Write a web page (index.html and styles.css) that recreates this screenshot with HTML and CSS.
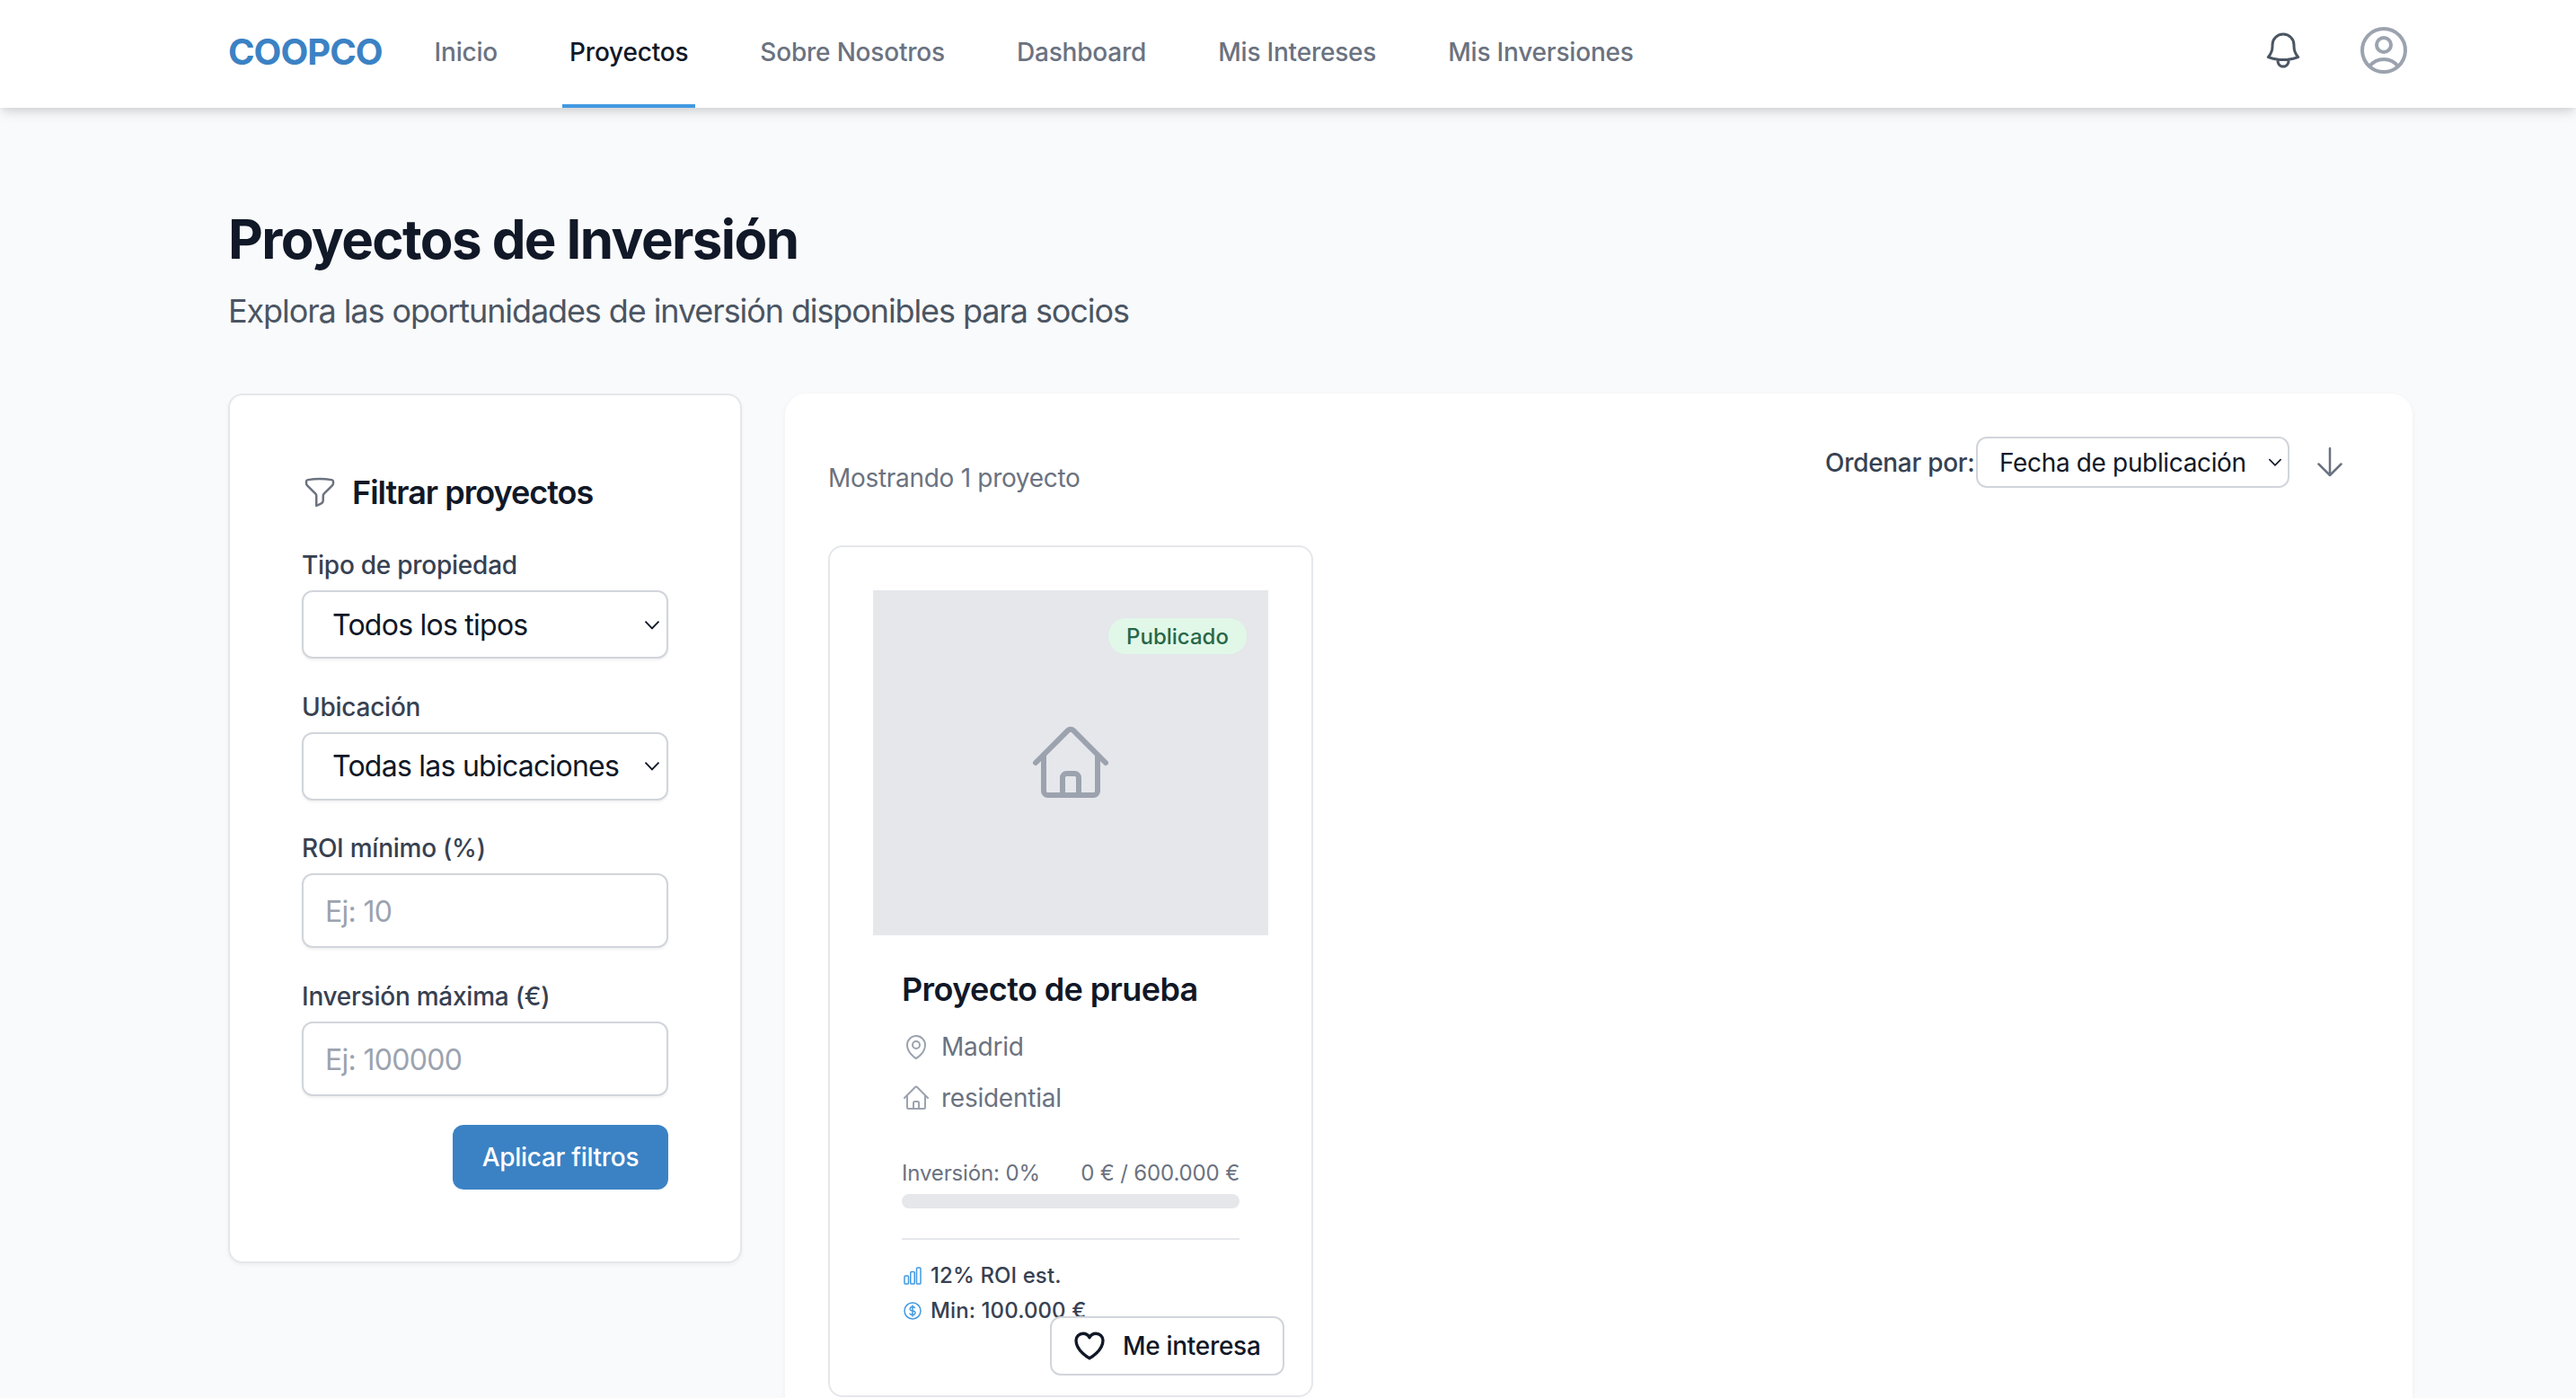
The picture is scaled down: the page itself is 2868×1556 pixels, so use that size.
FILE: index.html
```html
<!DOCTYPE html>
<html lang="es">
<head>
  <meta charset="UTF-8">
  <title>Proyectos de Inversión - COOPCO</title>
  <link rel="stylesheet" href="styles.css">
</head>
<body>
  <header class="topbar">
    <div class="topbar-inner">
      <a class="logo" href="#">COOPCO</a>
      <nav class="nav">
        <a class="nav-link" href="#">Inicio</a>
        <a class="nav-link active" href="#">Proyectos</a>
        <a class="nav-link" href="#">Sobre Nosotros</a>
        <a class="nav-link" href="#">Dashboard</a>
        <a class="nav-link" href="#">Mis Intereses</a>
        <a class="nav-link" href="#">Mis Inversiones</a>
      </nav>
      <div class="topbar-icons">
        <svg class="icon icon-bell" viewBox="0 0 24 24"><path d="M14.857 17.082a23.848 23.848 0 005.454-1.31A8.967 8.967 0 0118 9.75v-.7V9A6 6 0 006 9v.75a8.967 8.967 0 01-2.312 6.022c1.733.64 3.56 1.085 5.455 1.31m5.714 0a24.255 24.255 0 01-5.714 0m5.714 0a3 3 0 11-5.714 0"/></svg>
        <svg class="icon icon-user" viewBox="0 0 24 24"><path d="M17.982 18.725A7.488 7.488 0 0012 15.75a7.488 7.488 0 00-5.982 2.975m11.964 0a9 9 0 10-11.963 0m11.963 0A8.966 8.966 0 0112 21a8.966 8.966 0 01-5.982-2.275M15 9.75a3 3 0 11-6 0 3 3 0 016 0z"/></svg>
      </div>
    </div>
  </header>

  <main class="page">
    <h1 class="page-title">Proyectos de Inversión</h1>
    <p class="page-subtitle">Explora las oportunidades de inversión disponibles para socios</p>

    <div class="columns">
      <aside class="filters">
        <h2 class="filters-title">
          <svg class="icon icon-funnel" viewBox="0 0 24 24"><path d="M12 3c2.755 0 5.455.232 8.083.678.533.09.917.556.917 1.096v1.044a2.25 2.25 0 01-.659 1.591l-5.432 5.432a2.25 2.25 0 00-.659 1.591v2.927a2.25 2.25 0 01-1.244 2.013L9.75 21v-6.568a2.25 2.25 0 00-.659-1.591L3.659 7.409A2.25 2.25 0 013 5.818V4.774c0-.54.384-1.006.917-1.096A48.32 48.32 0 0112 3z"/></svg>
          Filtrar proyectos
        </h2>
        <div class="field">
          <label class="field-label">Tipo de propiedad</label>
          <select class="select select-large"><option>Todos los tipos</option></select>
        </div>
        <div class="field">
          <label class="field-label">Ubicación</label>
          <select class="select select-large"><option>Todas las ubicaciones</option></select>
        </div>
        <div class="field">
          <label class="field-label">ROI mínimo (%)</label>
          <input class="text-input" type="text" placeholder="Ej: 10">
        </div>
        <div class="field">
          <label class="field-label">Inversión máxima (€)</label>
          <input class="text-input" type="text" placeholder="Ej: 100000">
        </div>
        <div class="filters-actions">
          <button class="btn-primary">Aplicar filtros</button>
        </div>
      </aside>

      <section class="results">
        <div class="toolbar">
          <span class="results-count">Mostrando 1 proyecto</span>
          <div class="sort">
            <label class="sort-label">Ordenar por:</label>
            <select class="select select-small"><option>Fecha de publicación</option></select>
            <svg class="icon icon-arrow" viewBox="0 0 24 24"><path d="M19.5 13.5L12 21m0 0l-7.5-7.5M12 21V3"/></svg>
          </div>
        </div>

        <article class="project">
          <div class="project-image">
            <span class="badge">Publicado</span>
            <svg class="icon icon-house" viewBox="0 0 24 24"><path d="M2.25 12l8.954-8.955c.44-.439 1.152-.439 1.591 0L21.75 12M4.5 9.75v10.125c0 .621.504 1.125 1.125 1.125H9.75v-4.875c0-.621.504-1.125 1.125-1.125h2.25c.621 0 1.125.504 1.125 1.125V21h4.125c.621 0 1.125-.504 1.125-1.125V9.75M8.25 21h8.25"/></svg>
          </div>
          <div class="project-body">
            <h3 class="project-title">Proyecto de prueba</h3>
            <div class="project-meta first">
              <svg class="icon icon-meta" viewBox="0 0 24 24"><path d="M15 10.5a3 3 0 11-6 0 3 3 0 016 0z"/><path d="M19.5 10.5c0 7.142-7.5 11.25-7.5 11.25S4.5 17.642 4.5 10.5a7.5 7.5 0 1115 0z"/></svg>
              Madrid
            </div>
            <div class="project-meta">
              <svg class="icon icon-meta" viewBox="0 0 24 24"><path d="M2.25 12l8.954-8.955c.44-.439 1.152-.439 1.591 0L21.75 12M4.5 9.75v10.125c0 .621.504 1.125 1.125 1.125H9.75v-4.875c0-.621.504-1.125 1.125-1.125h2.25c.621 0 1.125.504 1.125 1.125V21h4.125c.621 0 1.125-.504 1.125-1.125V9.75M8.25 21h8.25"/></svg>
              residential
            </div>
            <div class="progress-labels">
              <span>Inversión: 0%</span>
              <span>0 € / 600.000 €</span>
            </div>
            <div class="progress-bar"></div>
            <div class="project-stats">
              <div class="stat">
                <svg class="icon icon-stat" viewBox="0 0 24 24"><path d="M3 13.125C3 12.504 3.504 12 4.125 12h2.25c.621 0 1.125.504 1.125 1.125v6.75C7.5 20.496 6.996 21 6.375 21h-2.25A1.125 1.125 0 013 19.875v-6.75zM9.75 8.625c0-.621.504-1.125 1.125-1.125h2.25c.621 0 1.125.504 1.125 1.125v11.25c0 .621-.504 1.125-1.125 1.125h-2.25a1.125 1.125 0 01-1.125-1.125V8.625zM16.5 4.125c0-.621.504-1.125 1.125-1.125h2.25C20.496 3 21 3.504 21 4.125v15.75c0 .621-.504 1.125-1.125 1.125h-2.25a1.125 1.125 0 01-1.125-1.125V4.125z"/></svg>
                12% ROI est.
              </div>
              <div class="stat">
                <svg class="icon icon-stat" viewBox="0 0 24 24"><path d="M12 6v12m-3-2.818l.879.659c1.171.879 3.07.879 4.242 0 1.172-.879 1.172-2.303 0-3.182C13.536 12.219 12.768 12 12 12c-.725 0-1.45-.22-2.003-.659-1.106-.879-1.106-2.303 0-3.182s2.9-.879 4.006 0l.415.33M21 12a9 9 0 11-18 0 9 9 0 0118 0z"/></svg>
                Min: 100.000 €
              </div>
            </div>
          </div>
          <button class="btn-interest">
            <svg class="icon icon-heart" viewBox="0 0 24 24"><path d="M21 8.25c0-2.485-2.099-4.5-4.688-4.5-1.935 0-3.597 1.126-4.312 2.733-.715-1.607-2.377-2.733-4.313-2.733C5.1 3.75 3 5.765 3 8.25c0 7.22 9 12 9 12s9-4.78 9-12z"/></svg>
            Me interesa
          </button>
        </article>
      </section>
    </div>
  </main>
</body>
</html>
```

FILE: styles.css
```css
* {
  box-sizing: border-box;
}

html,
body {
  height: 1556px;
  margin: 0;
  overflow: hidden;
}

body {
  background-color: #f9fafb;
  color: #111827;
  font-family: Inter, "Liberation Sans", sans-serif;
}

.icon {
  display: block;
  flex-shrink: 0;
  fill: none;
  stroke: currentColor;
  stroke-width: 1.5;
  stroke-linecap: round;
  stroke-linejoin: round;
}

/* header */
.topbar {
  height: 120px;
  background-color: #fff;
  box-shadow: 0 8px 12px -2px rgba(0, 0, 0, 0.1), 0 4px 8px -2px rgba(0, 0, 0, 0.08);
  position: relative;
}

.topbar-inner {
  display: flex;
  align-items: stretch;
  height: 100%;
  width: 2432px;
  margin-left: 254px;
}

.logo {
  align-self: center;
  margin-top: -6px;
  margin-right: 50px;
  font-size: 40px;
  font-weight: 700;
  letter-spacing: -1px;
  color: #3b82c4;
  text-decoration: none;
}

.nav {
  display: flex;
  gap: 64px;
}

.nav-link {
  display: flex;
  align-items: center;
  padding: 0 8px;
  border-bottom: 4px solid transparent;
  font-size: 28px;
  font-weight: 500;
  letter-spacing: -0.2px;
  color: #6b7280;
  text-decoration: none;
}

.nav-link.active {
  color: #111827;
  border-bottom-color: #4299e1;
}

.topbar-icons {
  display: flex;
  align-items: center;
  gap: 56px;
  margin-left: auto;
  padding-bottom: 8px;
}

.icon-bell {
  width: 48px;
  height: 48px;
  color: #4b5563;
}

.icon-user {
  width: 64px;
  height: 64px;
  color: #9ca3af;
}

/* page */
.page {
  width: 2432px;
  margin-left: 254px;
  padding-top: 110px;
}

.page-title {
  margin: 0;
  font-size: 60px;
  line-height: 72px;
  font-weight: 700;
  letter-spacing: -1.6px;
  color: #111827;
}

.page-subtitle {
  margin: 16px 0 64px;
  font-size: 36px;
  line-height: 56px;
  letter-spacing: -1.1px;
  color: #4b5563;
}

.columns {
  display: flex;
  align-items: flex-start;
  gap: 48px;
}

/* filters */
.filters {
  width: 572px;
  flex-shrink: 0;
  padding: 80px;
  background-color: #fff;
  border: 2px solid #e5e7eb;
  border-radius: 16px;
  box-shadow: 0 2px 4px rgba(0, 0, 0, 0.05);
}

.filters-title {
  display: flex;
  align-items: center;
  gap: 16px;
  margin: 0 0 33px;
  font-size: 36px;
  line-height: 56px;
  font-weight: 600;
  letter-spacing: -1px;
}

.icon-funnel {
  width: 40px;
  height: 40px;
  color: #6b7280;
}

.field {
  margin-bottom: 33.5px;
}

.field-label {
  display: block;
  margin-bottom: 8px;
  font-size: 28px;
  line-height: 40px;
  font-weight: 500;
  letter-spacing: -0.25px;
  color: #374151;
}

.select {
  display: block;
  appearance: none;
  background-color: #fff;
  background-image: url("data:image/svg+xml,%3Csvg xmlns='http://www.w3.org/2000/svg' viewBox='0 0 16 10'%3E%3Cpath d='M2 2l6 6 6-6' fill='none' stroke='%23111827' stroke-width='1.5'/%3E%3C/svg%3E");
  background-repeat: no-repeat;
  border: 2px solid #d1d5db;
  border-radius: 12px;
  box-shadow: 0 2px 3px rgba(0, 0, 0, 0.06);
  color: #111827;
  font-family: inherit;
}

.select-large {
  width: 100%;
  height: 76px;
  padding: 0 32px;
  font-size: 32px;
  letter-spacing: -0.75px;
  background-size: 20px 12.5px;
  background-position: right 6px center;
}

.select-small {
  width: 349px;
  height: 57px;
  padding: 0 24px;
  font-size: 28px;
  letter-spacing: -0.35px;
  box-shadow: none;
  background-size: 18px 11px;
  background-position: right 5px center;
}

.text-input {
  display: block;
  width: 100%;
  height: 83px;
  padding: 2px 24px 0;
  background-color: #fff;
  border: 2px solid #d1d5db;
  border-radius: 12px;
  box-shadow: 0 2px 3px rgba(0, 0, 0, 0.06);
  font-family: inherit;
  font-size: 32px;
  letter-spacing: -0.7px;
}

.text-input::placeholder {
  color: #9ca3af;
  opacity: 1;
}

.filters-actions {
  display: flex;
  justify-content: flex-end;
  margin-top: -1px;
}

.btn-primary {
  width: 240px;
  height: 72px;
  background-color: #3b82c4;
  border: none;
  border-radius: 12px;
  color: #fff;
  font-family: inherit;
  font-size: 28px;
  font-weight: 500;
  letter-spacing: -0.3px;
}

/* results */
.results {
  flex: 1;
  height: 1118px;
  padding: 48px;
  background-color: #fff;
  border-radius: 24px 24px 0 0;
  box-shadow: 0 2px 6px rgba(0, 0, 0, 0.05);
}

.toolbar {
  display: flex;
  justify-content: space-between;
  height: 66px;
  margin-bottom: 55px;
}

.results-count {
  padding-top: 26px;
  font-size: 28px;
  line-height: 40px;
  letter-spacing: -0.3px;
  color: #6b7280;
}

.sort {
  display: flex;
  align-items: flex-start;
  padding-right: 24px;
}

.sort-label {
  width: 168px;
  white-space: nowrap;
  font-size: 28px;
  line-height: 59px;
  font-weight: 500;
  letter-spacing: -0.3px;
  color: #374151;
}

.icon-arrow {
  width: 40px;
  height: 40px;
  margin: 8px 0 0 25px;
  color: #6b7280;
}

/* project card */
.project {
  position: relative;
  width: 540px;
  padding: 48px 48px 73px;
  background-color: #fff;
  border: 2px solid #e5e7eb;
  border-radius: 16px;
}

.project-image {
  position: relative;
  display: flex;
  align-items: center;
  justify-content: center;
  height: 384px;
  background-color: #e5e7eb;
}

.icon-house {
  width: 96px;
  height: 96px;
  color: #9ca3af;
}

.badge {
  position: absolute;
  top: 31px;
  right: 24px;
  width: 154px;
  height: 40px;
  line-height: 42px;
  text-align: center;
  border-radius: 20px;
  background-color: #e1f8e8;
  color: #276749;
  font-size: 24px;
  font-weight: 500;
}

.project-body {
  padding: 32px 32px 0;
}

.project-title {
  margin: 0 0 16px;
  font-size: 36px;
  line-height: 56px;
  font-weight: 600;
  letter-spacing: -0.6px;
}

.project-meta {
  display: flex;
  align-items: center;
  gap: 12px;
  margin-top: 17px;
  font-size: 28px;
  line-height: 40px;
  letter-spacing: -0.25px;
  color: #6b7280;
}

.project-meta.first {
  margin-top: 0;
}

.icon-meta {
  width: 32px;
  height: 32px;
  color: #9ca3af;
}

.progress-labels {
  display: flex;
  justify-content: space-between;
  margin-top: 46px;
  font-size: 24px;
  line-height: 36px;
  letter-spacing: -0.15px;
  color: #6b7280;
}

.progress-bar {
  height: 16px;
  margin-top: 5px;
  background-color: #e5e7eb;
  border-radius: 8px;
}

.project-stats {
  margin-top: 33px;
  padding-top: 22px;
  border-top: 2px solid #e5e7eb;
}

.stat {
  display: flex;
  align-items: center;
  gap: 8px;
  margin-bottom: 3px;
  font-size: 24px;
  line-height: 36px;
  font-weight: 500;
  letter-spacing: 0.1px;
  color: #374151;
}

.icon-stat {
  width: 24px;
  height: 24px;
  color: #4299e1;
}

.btn-interest {
  position: absolute;
  right: 30px;
  bottom: 22px;
  display: flex;
  align-items: center;
  gap: 17px;
  width: 261px;
  height: 66px;
  padding: 0 22px;
  background-color: #fff;
  border: 2px solid #d1d5db;
  border-radius: 12px;
  color: #111827;
  font-family: inherit;
  font-size: 28px;
  font-weight: 500;
  white-space: nowrap;
  letter-spacing: -0.3px;
}

.icon-heart {
  width: 40px;
  height: 40px;
  stroke-width: 2;
}
```
